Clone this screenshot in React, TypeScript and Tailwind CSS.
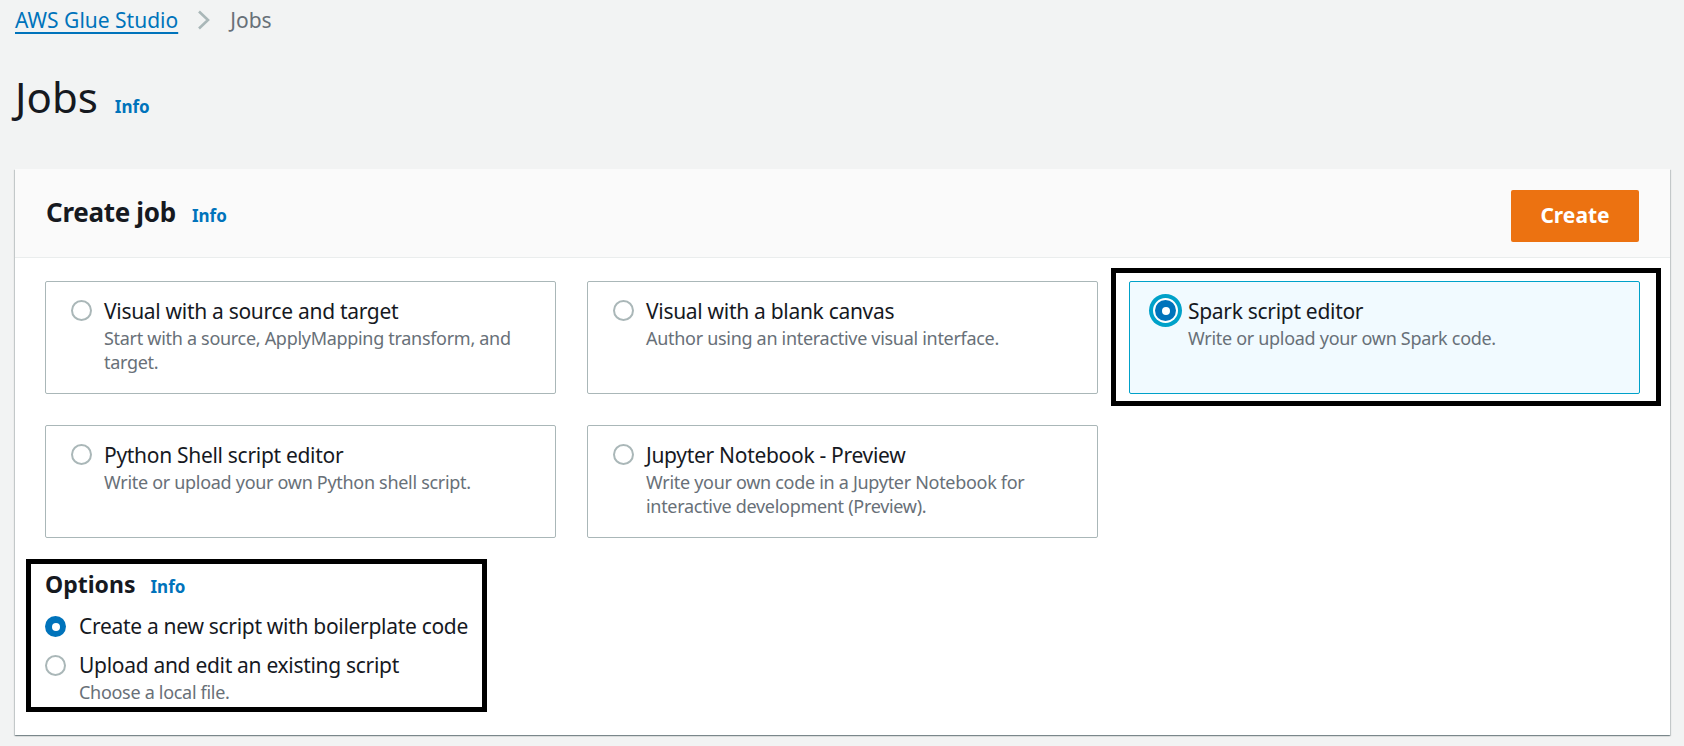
import React from "react";

type Tile = {
  title: string;
  description: string;
  selected?: boolean;
};

const tiles: Tile[] = [
  {
    title: "Visual with a source and target",
    description: "Start with a source, ApplyMapping transform, and target.",
  },
  {
    title: "Visual with a blank canvas",
    description: "Author using an interactive visual interface.",
  },
  {
    title: "Spark script editor",
    description: "Write or upload your own Spark code.",
    selected: true,
  },
  {
    title: "Python Shell script editor",
    description: "Write or upload your own Python shell script.",
  },
  {
    title: "Jupyter Notebook - Preview",
    description:
      "Write your own code in a Jupyter Notebook for interactive development (Preview).",
  },
];

function Radio({ checked, focused }: { checked?: boolean; focused?: boolean }) {
  if (checked) {
    return (
      <span
        className={`flex h-[21px] w-[21px] shrink-0 items-center justify-center rounded-full bg-[#0073bb] ${
          focused ? "shadow-[0_0_0_2px_#ffffff,0_0_0_6px_#00a1c9]" : ""
        }`}
      >
        <span className="block h-[8px] w-[8px] rounded-full bg-white" />
      </span>
    );
  }
  return (
    <span className="block h-[21px] w-[21px] shrink-0 rounded-full border-2 border-[#aab7b8] bg-white" />
  );
}

function InfoLink() {
  return (
    <a className="text-[17px] font-bold leading-none text-[#0073bb]" href="#">
      Info
    </a>
  );
}

function TileCard({ tile }: { tile: Tile }) {
  const card = (
    <div
      className={`flex h-[113px] gap-[12px] rounded-[2px] border pl-[25px] pr-[26px] pt-[14px] ${
        tile.selected
          ? "border-[#00a1c9] bg-[#f1faff]"
          : "border-[#aab7b8] bg-white"
      }`}
    >
      <div className="mt-[4px]">
        <Radio checked={tile.selected} focused={tile.selected} />
      </div>
      <div className="min-w-0">
        <div className="text-[21px] leading-[30px] tracking-[-0.3px] text-[#16191f]">
          {tile.title}
        </div>
        <div className="text-[18px] leading-[24px] tracking-[-0.3px] text-[#687078]">
          {tile.description}
        </div>
      </div>
    </div>
  );

  if (!tile.selected) return card;

  // highlighted with a black annotation frame in the screenshot
  return (
    <div className="relative">
      {card}
      <div className="pointer-events-none absolute -bottom-[12px] -left-[18px] -right-[21px] -top-[13px] border-[5px] border-black" />
    </div>
  );
}

export default function App() {
  return (
    <div className="min-h-screen bg-[#f2f3f3] font-['Noto_Sans',sans-serif] text-[#16191f]">
      <div className="pl-[15px] pr-[14px] pt-[5px]">
        {/* Breadcrumbs */}
        <nav className="flex items-center text-[21px] leading-[30px]">
          <a href="#" className="text-[#0073bb] underline underline-offset-[4px]">
            AWS Glue Studio
          </a>
          <svg
            className="mx-[18px] h-[20px] w-[16px]"
            viewBox="0 0 16 20"
            fill="none"
            stroke="#aab7b8"
            strokeWidth="2.6"
          >
            <path d="M3 1.5 L12 10 L3 18.5" />
          </svg>
          <span className="text-[#687078]">Jobs</span>
        </nav>

        {/* Page header */}
        <div className="mt-[38px] flex items-baseline gap-[17px]">
          <h1 className="text-[42px] font-normal leading-[48px]">Jobs</h1>
          <InfoLink />
        </div>

        {/* Create job container */}
        <div className="mt-[48px] bg-white shadow-[0_1px_1px_0_rgba(0,28,36,0.3),1px_1px_1px_0_rgba(0,28,36,0.15),-1px_1px_1px_0_rgba(0,28,36,0.15)]">
          <div className="flex items-start justify-between border-b border-[#eaeded] bg-[#fafafa] px-[31px] pb-[15px] pt-[21px]">
            <div className="mt-[4px] flex items-baseline gap-[16px]">
              <h2 className="text-[26px] font-bold leading-[36px] tracking-[-0.3px]">
                Create job
              </h2>
              <InfoLink />
            </div>
            <button
              type="button"
              className="h-[52px] w-[128px] rounded-[2px] bg-[#ec7211] text-[21px] font-bold text-white"
            >
              Create
            </button>
          </div>

          <div className="px-[30px] pb-[31px] pt-[23px]">
            <div className="grid grid-cols-3 gap-x-[31px] gap-y-[31px]">
              {tiles.map((t) => (
                <TileCard key={t.title} tile={t} />
              ))}
            </div>

            {/* Options */}
            <div className="relative mt-[30px]">
              <div className="flex items-baseline gap-[15px]">
                <h3 className="text-[23px] font-bold leading-[32px]">Options</h3>
                <InfoLink />
              </div>
              <div className="mt-[11px] flex gap-[13px]">
                <div className="mt-[5px]">
                  <Radio checked />
                </div>
                <span className="text-[21px] leading-[30px] tracking-[-0.3px]">
                  Create a new script with boilerplate code
                </span>
              </div>
              <div className="mt-[9px] flex gap-[13px]">
                <div className="mt-[5px]">
                  <Radio />
                </div>
                <div>
                  <div className="text-[21px] leading-[30px] tracking-[-0.3px]">
                    Upload and edit an existing script
                  </div>
                  <div className="text-[18px] leading-[24px] tracking-[-0.3px] text-[#687078]">
                    Choose a local file.
                  </div>
                </div>
              </div>
              <div className="pointer-events-none absolute -left-[19px] -top-[9px] h-[153px] w-[461px] border-[5px] border-black" />
            </div>
          </div>
        </div>
      </div>
    </div>
  );
}
